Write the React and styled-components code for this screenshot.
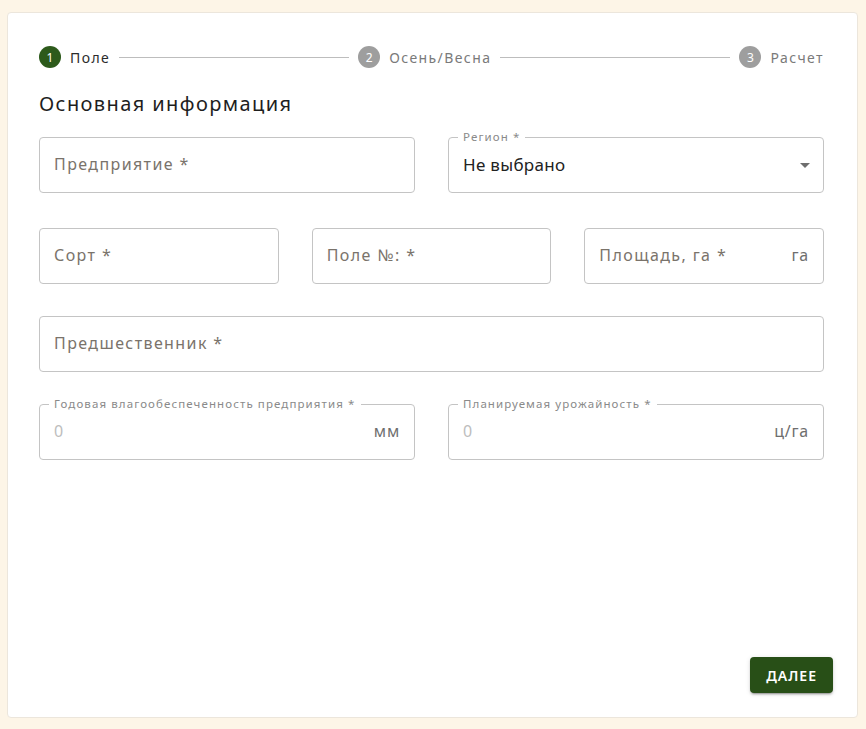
import React from "react";
import styled, { createGlobalStyle } from "styled-components";

const GlobalStyle = createGlobalStyle`
  html, body {
    margin: 0;
    padding: 0;
    background: #fdf5e7;
    font-family: "Noto Sans", "Open Sans", sans-serif;
  }
  * { box-sizing: border-box; }
`;

const steps = [
  { num: 1, title: "Поле", active: true },
  { num: 2, title: "Осень/Весна" },
  { num: 3, title: "Расчет" },
];

export default function App() {
  return (
    <Page>
      <GlobalStyle />
      <Card>
        <Content>
          <Stepper>
            {steps.map((s, i) => (
              <React.Fragment key={s.num}>
                {i > 0 && <Connector />}
                <Step>
                  <StepIcon $active={s.active}>{s.num}</StepIcon>
                  <StepLabel $active={s.active}>{s.title}</StepLabel>
                </Step>
              </React.Fragment>
            ))}
          </Stepper>

          <Title>Основная информация</Title>

          <Form>
            <Row $cols={2}>
              <Field>
                <Placeholder>Предприятие *</Placeholder>
              </Field>
              <Field>
                <Legend>Регион *</Legend>
                <Value>Не выбрано</Value>
                <Arrow />
              </Field>
            </Row>
            <Row $cols={3} $gap={35}>
              <Field>
                <Placeholder>Сорт *</Placeholder>
              </Field>
              <Field>
                <Placeholder>Поле №: *</Placeholder>
              </Field>
              <Field>
                <Placeholder>Площадь, га *</Placeholder>
                <Unit>га</Unit>
              </Field>
            </Row>
            <Row $cols={1}>
              <Field>
                <Placeholder>Предшественник *</Placeholder>
              </Field>
            </Row>
            <Row $cols={2}>
              <Field>
                <Legend>Годовая влагообеспеченность предприятия *</Legend>
                <Zero>0</Zero>
                <Unit>мм</Unit>
              </Field>
              <Field>
                <Legend>Планируемая урожайность *</Legend>
                <Zero>0</Zero>
                <Unit>ц/га</Unit>
              </Field>
            </Row>
          </Form>
        </Content>

        <Footer>
          <NextButton>Далее</NextButton>
        </Footer>
      </Card>
    </Page>
  );
}

const Page = styled.div`
  height: 729px;
  padding: 12px 8px 11px 7px;
`;

const Card = styled.div`
  height: 100%;
  background: #ffffff;
  border: 1px solid #ece6dc;
  border-radius: 4px;
  display: flex;
  flex-direction: column;
  justify-content: space-between;
`;

const Content = styled.div`
  padding: 32px 33px 0 31px;
`;

const Stepper = styled.div`
  display: flex;
  align-items: center;
  height: 24px;
`;

const Step = styled.div`
  display: flex;
  align-items: center;
  gap: 9px;
`;

const StepIcon = styled.div`
  width: 22px;
  height: 22px;
  border-radius: 50%;
  background: ${(p) => (p.$active ? "#2d5a1b" : "#9e9e9e")};
  color: #fff;
  font-size: 12px;
  display: flex;
  align-items: center;
  justify-content: center;
`;

const StepLabel = styled.span`
  font-size: 14px;
  color: ${(p) => (p.$active ? "#2b2b2b" : "#7a7a7a")};
  letter-spacing: 1.4px;
`;

const Connector = styled.div`
  flex: 1;
  height: 1px;
  background: #bdbdbd;
  margin: 0 9px;
`;

const Title = styled.h2`
  margin: 22px 0 0;
  font-size: 20px;
  font-weight: 400;
  color: #1e1e1e;
  letter-spacing: 1.4px;
  line-height: 26px;
`;

const Form = styled.div`
  margin-top: 20px;
  display: flex;
  flex-direction: column;
  gap: 32px;
`;

const Row = styled.div`
  display: grid;
  grid-template-columns: repeat(${(p) => p.$cols}, 1fr);
  column-gap: 33px;
  margin-top: ${(p) => (p.$gap ? p.$gap - 32 : 0)}px;
`;

const Field = styled.div`
  position: relative;
  height: 56px;
  border: 1px solid #c4c4c4;
  border-radius: 4px;
  display: flex;
  align-items: center;
  padding: 0 14px 2px;
`;

const Placeholder = styled.span`
  font-size: 16px;
  color: #7a736b;
  letter-spacing: 1.4px;
`;

const Value = styled.span`
  font-size: 17px;
  color: #222;
  letter-spacing: 0.3px;
`;

const Zero = styled.span`
  font-size: 16px;
  color: #bdbdbd;
`;

const Unit = styled.span`
  margin-left: auto;
  font-size: 16px;
  color: #6e6e6e;
  letter-spacing: 0.8px;
`;

const Legend = styled.span`
  position: absolute;
  top: -8px;
  left: 9px;
  padding: 0 5px;
  background: #fff;
  font-size: 11.5px;
  line-height: 14px;
  color: #8a8a8a;
  letter-spacing: 1.1px;
  white-space: nowrap;
`;

const Arrow = styled.span`
  margin-left: auto;
  margin-right: -1px;
  margin-top: 2px;
  width: 0;
  height: 0;
  border-left: 5px solid transparent;
  border-right: 5px solid transparent;
  border-top: 5px solid #6e6e6e;
`;

const Footer = styled.div`
  display: flex;
  justify-content: flex-end;
  padding: 0 24px 24px 0;
`;

const NextButton = styled.button`
  height: 36px;
  padding: 0 16px;
  border: none;
  border-radius: 4px;
  background: #284f17;
  color: #fff;
  font-family: inherit;
  font-size: 14px;
  font-weight: 600;
  text-transform: uppercase;
  letter-spacing: 1px;
  box-shadow: 0 3px 1px -2px rgba(0, 0, 0, 0.2), 0 2px 2px 0 rgba(0, 0, 0, 0.14),
    0 1px 5px 0 rgba(0, 0, 0, 0.12);
  cursor: pointer;
`;
